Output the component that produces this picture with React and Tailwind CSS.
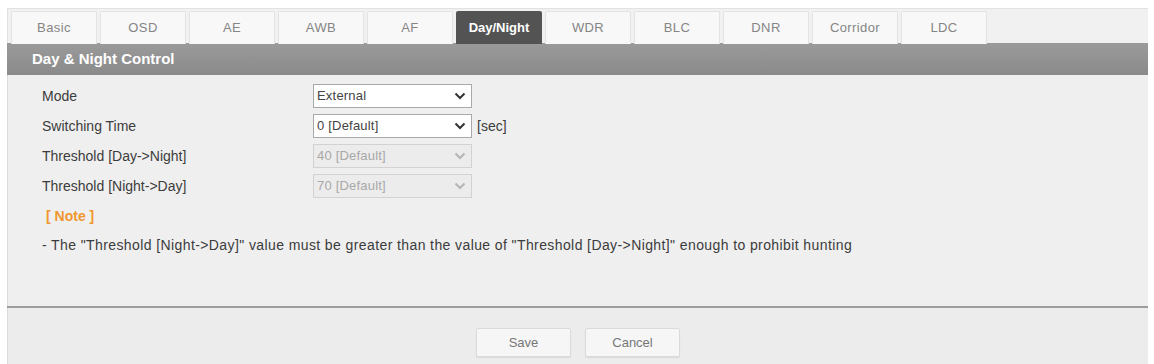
import React, { useState } from 'react';

const tabs = ['Basic', 'OSD', 'AE', 'AWB', 'AF', 'Day/Night', 'WDR', 'BLC', 'DNR', 'Corridor', 'LDC'];

const rows = [
  { label: 'Mode', value: 'External', disabled: false },
  { label: 'Switching Time', value: '0 [Default]', disabled: false, unit: '[sec]' },
  { label: 'Threshold [Day->Night]', value: '40 [Default]', disabled: true },
  { label: 'Threshold [Night->Day]', value: '70 [Default]', disabled: true },
];

const Chevron = ({ disabled }) => (
  <svg width="12" height="8" viewBox="0 0 12 8" className="mr-[5px]">
    <path
      d="M1.5 1.5 L6 6 L10.5 1.5"
      fill="none"
      stroke={disabled ? '#b5b5b5' : '#333'}
      strokeWidth="2"
    />
  </svg>
);

const FakeSelect = ({ value, disabled }) => (
  <div
    className={`w-[159px] h-[24px] flex items-center justify-between border text-[13px] tracking-[0.2px] pl-[3px] ${
      disabled ? 'bg-[#ececec] border-[#d2d2d2] text-[#a8a8a8]' : 'bg-white border-[#a9a9a9] text-[#444]'
    }`}
  >
    <span>{value}</span>
    <Chevron disabled={disabled} />
  </div>
);

export default function App() {
  const [active, setActive] = useState('Day/Night');

  return (
    <div className="w-[1154px] h-[364px] bg-white pt-[8px] px-[7px] font-['Liberation_Sans',Arial,sans-serif]">
      <div className="w-[1141px]">
        {/* Tabs */}
        <div className="h-[35px] bg-[#f1f1f1] flex gap-[3px] pl-[3px] pt-[2px] border-l border-t border-[#e2e2e2]">
          {tabs.map((t) => (
            <div
              key={t}
              onClick={() => setActive(t)}
              className={`w-[86px] h-[33px] flex items-center justify-center text-[13px] tracking-[0.4px] cursor-pointer rounded-t-[2px] ${
                t === active
                  ? 'bg-[#535353] text-white font-bold tracking-normal'
                  : 'bg-[#f8f8f8] text-[#858585] border border-b-0 border-[#e3e3e3]'
              }`}
            >
              {t}
            </div>
          ))}
        </div>

        {/* Header */}
        <div className="h-[32px] bg-gradient-to-b from-[#9a9a9a] to-[#8a8a8a] flex items-center pl-[25px] text-white font-bold text-[15px]">
          Day &amp; Night Control
        </div>

        {/* Content */}
        <div className="h-[231px] bg-[#efefef] border-l border-[#dcdcdc] pl-[34px] pt-[9px]">
          <div className="flex flex-col gap-[6px]">
            {rows.map((r) => (
              <div key={r.label} className="flex items-center h-[24px]">
                <div className="w-[271px] text-[14px] text-[#3c3c3c]">{r.label}</div>
                <FakeSelect value={r.value} disabled={r.disabled} />
                {r.unit && <span className="ml-[5px] text-[14px] text-[#3c3c3c]">{r.unit}</span>}
              </div>
            ))}
          </div>
          <div className="mt-[8px] pl-[4px] text-[14px] font-bold text-[#f0962e]">[ Note ]</div>
          <div className="mt-[8px] text-[14px] tracking-[0.4px] text-[#3c3c3c]">
            - The "Threshold [Night-&gt;Day]" value must be greater than the value of "Threshold [Day-&gt;Night]" enough to prohibit hunting
          </div>
        </div>

        {/* Divider */}
        <div className="h-[2px] bg-[#9d9d9d]" />

        {/* Footer */}
        <div className="h-[57px] bg-[#ececec] border-l border-[#dcdcdc] flex justify-center items-start pt-[20px] gap-[14px]">
          <button className="w-[95px] h-[29px] bg-[#f6f6f6] border border-[#dadada] rounded-[2px] text-[13px] text-[#777] shadow-[0_1px_1px_rgba(0,0,0,0.08)]">
            Save
          </button>
          <button className="w-[95px] h-[29px] bg-[#f6f6f6] border border-[#dadada] rounded-[2px] text-[13px] text-[#777] shadow-[0_1px_1px_rgba(0,0,0,0.08)]">
            Cancel
          </button>
        </div>
      </div>
    </div>
  );
}
